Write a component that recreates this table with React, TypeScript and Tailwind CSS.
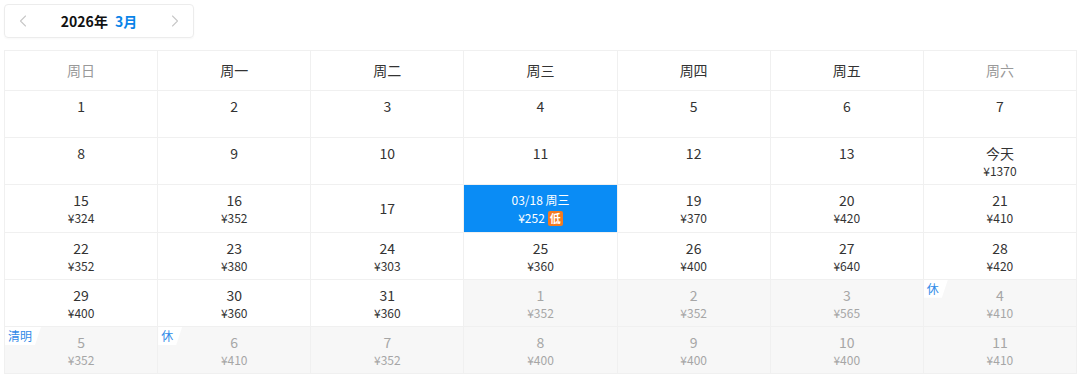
import { ChevronLeft, ChevronRight } from 'lucide-react';

type Cell = {
  day: string;
  price?: string;
  muted?: boolean;
  tag?: string;
  selected?: boolean;
  low?: boolean;
};

const weekdays = ['周日', '周一', '周二', '周三', '周四', '周五', '周六'];

const rows: Cell[][] = [
  [{ day: '1', price: '' }, { day: '2', price: '' }, { day: '3', price: '' }, { day: '4', price: '' }, { day: '5', price: '' }, { day: '6', price: '' }, { day: '7', price: '' }],
  [{ day: '8', price: '' }, { day: '9', price: '' }, { day: '10', price: '' }, { day: '11', price: '' }, { day: '12', price: '' }, { day: '13', price: '' }, { day: '今天', price: '¥1370' }],
  [
    { day: '15', price: '¥324' },
    { day: '16', price: '¥352' },
    { day: '17' },
    { day: '03/18 周三', price: '¥252', selected: true, low: true },
    { day: '19', price: '¥370' },
    { day: '20', price: '¥420' },
    { day: '21', price: '¥410' },
  ],
  [
    { day: '22', price: '¥352' },
    { day: '23', price: '¥380' },
    { day: '24', price: '¥303' },
    { day: '25', price: '¥360' },
    { day: '26', price: '¥400' },
    { day: '27', price: '¥640' },
    { day: '28', price: '¥420' },
  ],
  [
    { day: '29', price: '¥400' },
    { day: '30', price: '¥360' },
    { day: '31', price: '¥360' },
    { day: '1', price: '¥352', muted: true },
    { day: '2', price: '¥352', muted: true },
    { day: '3', price: '¥565', muted: true },
    { day: '4', price: '¥410', muted: true, tag: '休' },
  ],
  [
    { day: '5', price: '¥352', muted: true, tag: '清明' },
    { day: '6', price: '¥410', muted: true, tag: '休' },
    { day: '7', price: '¥352', muted: true },
    { day: '8', price: '¥400', muted: true },
    { day: '9', price: '¥400', muted: true },
    { day: '10', price: '¥400', muted: true },
    { day: '11', price: '¥410', muted: true },
  ],
];

function DayCell({ cell }: { cell: Cell }) {
  if (cell.selected) {
    return (
      <div className="h-[47.2px] border-r border-b border-[#f0f0f0] bg-[#0a8cf5] flex flex-col items-center pt-[6px] text-white">
        <div className="text-[12px] leading-[18px]">{cell.day}</div>
        <div className="flex items-center gap-[3px] text-[12px] leading-[18px]">
          <span>{cell.price}</span>
          {cell.low && (
            <span className="bg-[#f47a20] text-white text-[11px] leading-[15px] px-[2px] rounded-[2px] font-bold">低</span>
          )}
        </div>
      </div>
    );
  }

  const bg = cell.muted ? 'bg-[#f7f7f7]' : 'bg-white';
  const dayColor = cell.muted ? 'text-[#a6a6a6]' : 'text-[#333]';
  const priceColor = cell.muted ? 'text-[#a6a6a6]' : 'text-[#333]';

  return (
    <div className={`relative h-[47.2px] border-r border-b border-[#f0f0f0] ${bg}`}>
      {cell.tag && (
        <span className="absolute left-0 top-0 bg-white text-[#2f8ae8] text-[12px] leading-[18px] pl-[3px] pr-[9px] [clip-path:polygon(0_0,100%_0,calc(100%-6px)_100%,0_100%)]">
          {cell.tag}
        </span>
      )}
      {cell.price === undefined ? (
        <div className={`h-full flex items-center justify-center text-[14px] ${dayColor}`}>{cell.day}</div>
      ) : (
        <div className="flex flex-col items-center pt-[5px]">
          <div className={`text-[14px] leading-[20px] ${dayColor}`}>{cell.day}</div>
          <div className={`text-[12px] leading-[16px] ${priceColor}`}>{cell.price}</div>
        </div>
      )}
    </div>
  );
}

export default function App() {
  return (
    <div className="w-[1080px] h-[375px] bg-white overflow-hidden font-['Noto_Sans_CJK_SC','Noto_Sans',sans-serif]">
      {/* Month switcher */}
      <div className="pt-[4px] pl-[4px]">
        <div className="w-[190px] h-[34px] border border-[#ececec] rounded-[4px] flex items-center justify-between px-[8px] shadow-[0_1px_2px_rgba(0,0,0,0.03)]">
          <ChevronLeft className="w-[20px] h-[20px] text-[#c8c8c8]" strokeWidth={1.3} />
          <div className="flex items-center gap-[7px] text-[14px] font-bold">
            <span className="text-[#111]">2026年</span>
            <span className="text-[#0a84e8]">3月</span>
          </div>
          <ChevronRight className="w-[20px] h-[20px] text-[#c8c8c8]" strokeWidth={1.3} />
        </div>
      </div>

      {/* Calendar */}
      <div className="mt-[12px] ml-[4px] w-[1073px] border-l border-t border-[#f0f0f0] grid grid-cols-7">
        {weekdays.map((w, i) => (
          <div
            key={w}
            className={`h-[40px] border-r border-b border-[#f0f0f0] flex items-center justify-center text-[14px] ${
              i === 0 || i === 6 ? 'text-[#999]' : 'text-[#333]'
            }`}
          >
            {w}
          </div>
        ))}
        {rows.flat().map((cell, i) => (
          <DayCell key={i} cell={cell} />
        ))}
      </div>
    </div>
  );
}
